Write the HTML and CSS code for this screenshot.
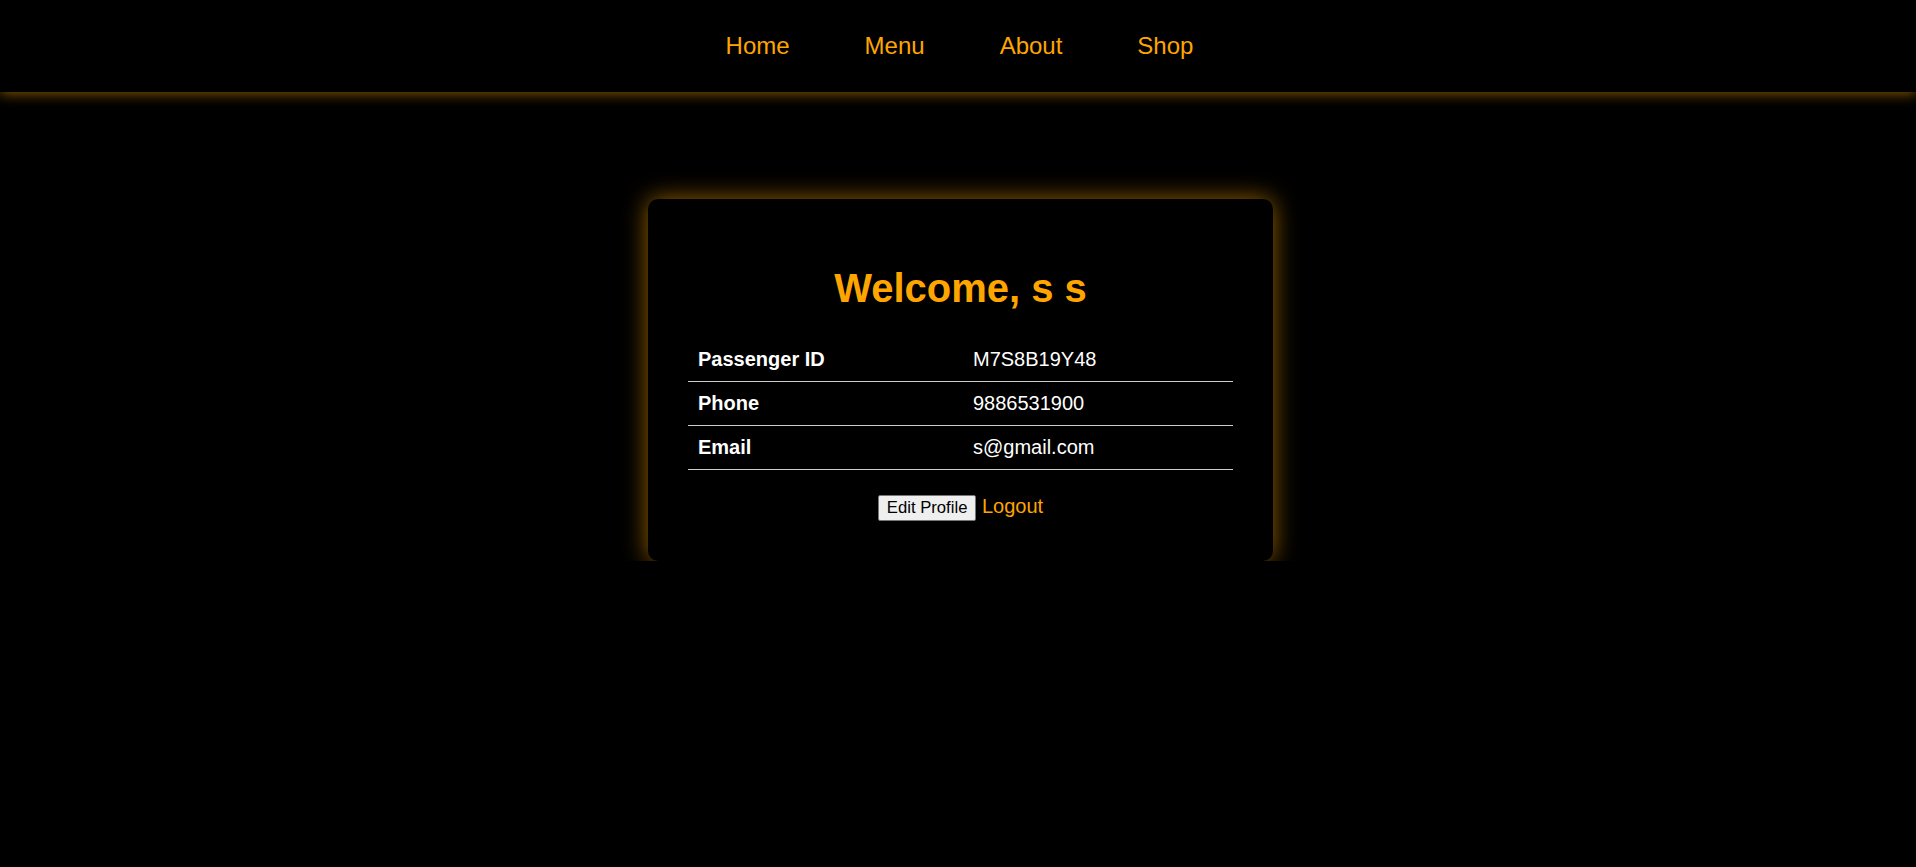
FILE: index.html
```html
<!DOCTYPE html>
<html>
<head>
<meta charset="utf-8">
<link rel="stylesheet" href="styles.css">
</head>
<body>
<nav class="topnav">
  <a href="#" class="nav-link">Home</a>
  <a href="#" class="nav-link">Menu</a>
  <a href="#" class="nav-link">About</a>
  <a href="#" class="nav-link">Shop</a>
</nav>
<main class="page">
  <section class="card">
    <h1 class="title">Welcome, s s</h1>
    <table class="info">
      <tr><th>Passenger ID</th><td>M7S8B19Y48</td></tr>
      <tr><th>Phone</th><td>9886531900</td></tr>
      <tr><th>Email</th><td>s@gmail.com</td></tr>
    </table>
    <div class="actions"><button class="btn">Edit Profile</button> <a href="#" class="logout">Logout</a></div>
  </section>
</main>
</body>
</html>
```
FILE: styles.css
```css
html, body {
  margin: 0;
  padding: 0;
  background: #000;
  color: #fff;
  font-family: "Liberation Sans", Arial, sans-serif;
  font-size: 20px;
}
.topnav {
  height: 92px;
  display: flex;
  justify-content: center;
  align-items: center;
  gap: 75px;
  padding-left: 3px;
  background: #000;
  box-shadow: 0 2px 12px rgba(255, 165, 0, 0.5);
}
.nav-link {
  color: #ffa500;
  text-decoration: none;
  font-size: 24px;
}
.page {
  display: flex;
  justify-content: center;
  padding-top: 107px;
  padding-left: 5px;
}
.card {
  width: 545px;
  padding: 40px;
  border-radius: 10px;
  background: #000;
  box-shadow: 0 0 25px rgba(255, 165, 0, 0.6);
}
.title {
  margin: 27px 0;
  text-align: center;
  color: #ffa500;
  font-size: 40px;
  font-weight: bold;
}
.info {
  width: 100%;
  border-collapse: collapse;
}
.info th, .info td {
  padding: 10px;
  text-align: left;
  border-bottom: 1px solid #ccc;
  font-size: 20px;
}
.info th {
  font-weight: bold;
  width: 255px;
}
.actions {
  margin-top: 23px;
  text-align: center;
  line-height: 27px;
}
.btn {
  font-family: "Liberation Sans", Arial, sans-serif;
  font-size: 16.67px;
  padding: 2px 8px;
  background: #efefef;
  color: #000;
  border: 1px solid #767676;
  border-radius: 2px;
  vertical-align: baseline;
}
.logout {
  color: #ffa500;
  text-decoration: none;
  font-size: 20px;
}
```
